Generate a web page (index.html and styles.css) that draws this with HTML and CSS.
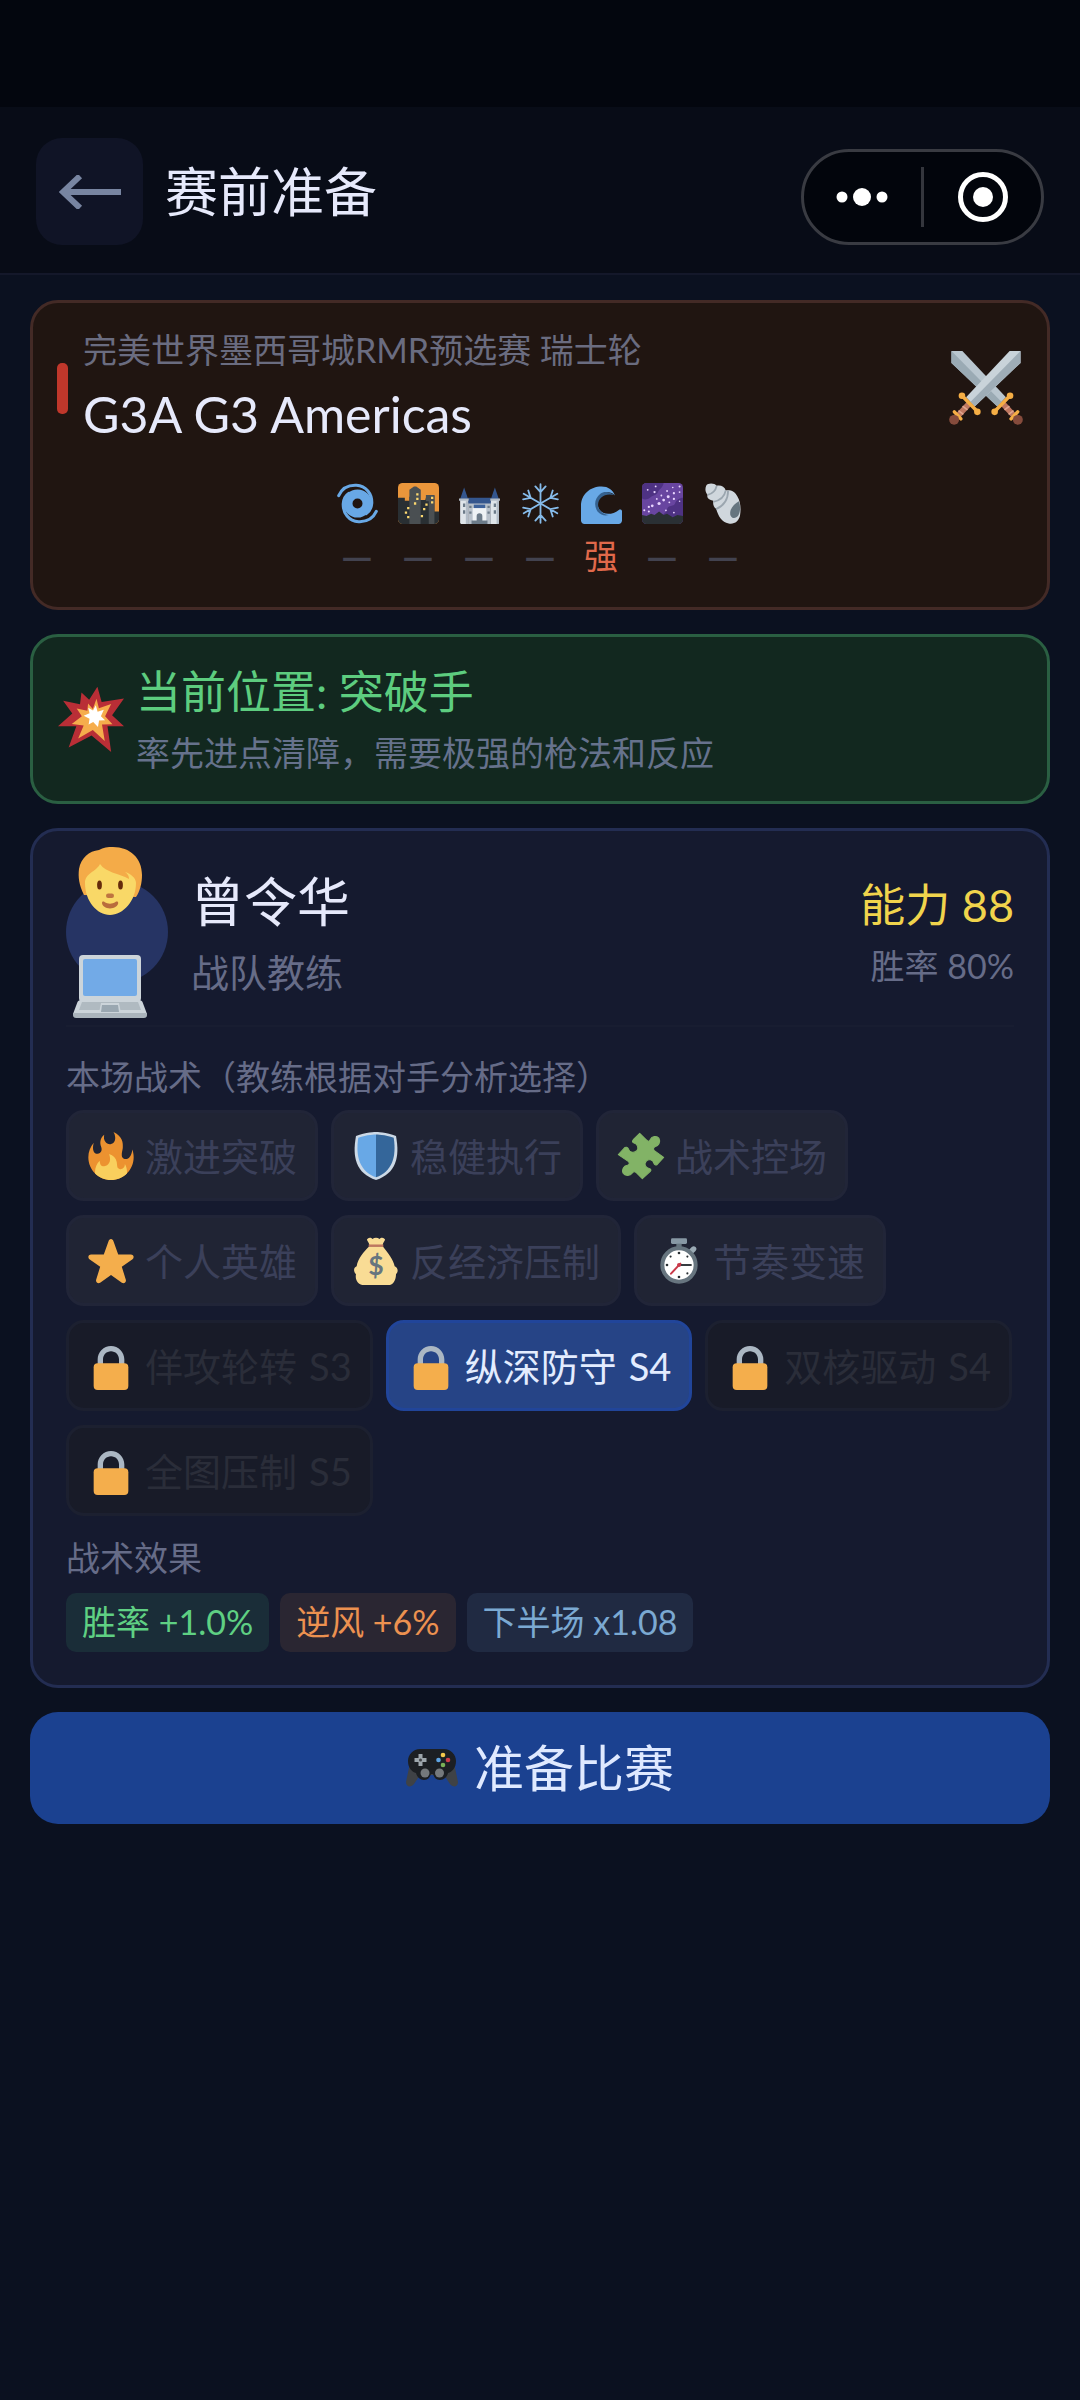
FILE: index.html
```html
<!DOCTYPE html>
<html lang="zh-CN">
<head>
    <meta charset="UTF-8">
    <meta name="viewport" content="width=device-width, initial-scale=1.0">
    <title>赛前准备</title>
    <link rel="stylesheet" href="styles.css">
</head>
<body>
    <!-- icon set -->
    <svg class="sprite" aria-hidden="true">
        <symbol id="i-swords" viewBox="0 0 36 36">
            <path fill="#b9c6cf" d="M1.2 0h5.3l21.2 22.5-4.2 4.5L1.2 5.8z"/>
            <path fill="#9aaab4" d="M1.2 0v5.8L23.5 27l2.1-2.2z"/>
            <path stroke="#bf7760" stroke-width="2.8" d="M25.8 25.2l7 7.6"/>
            <path stroke="#e0a58f" stroke-width=".8" d="M27 28.6l2.4-1.8M29 30.8l2.4-1.8"/>
            <path stroke="#f5ae45" stroke-width="1.7" stroke-linecap="round" d="M29.4 22l-7.2 7.4M30.2 33l3.2-3.4"/>
            <circle cx="29.7" cy="21.8" r="1.6" fill="#f5ae45"/>
            <circle cx="22.2" cy="29.6" r="1.6" fill="#f5ae45"/>
            <circle cx="33.5" cy="33.5" r="2.4" fill="#854b3c"/>
            <path fill="#c9d3da" d="M34.8 0h-5.3L8.3 22.5l4.2 4.5L34.8 5.8z"/>
            <path fill="#9fadb7" d="M34.8 0v5.8L12.5 27l-2.1-2.2z"/>
            <path stroke="#bf7760" stroke-width="2.8" d="M10.2 25.2l-7 7.6"/>
            <path stroke="#e0a58f" stroke-width=".8" d="M9 28.6l-2.4-1.8M7 30.8l-2.4-1.8"/>
            <path stroke="#f5ae45" stroke-width="1.7" stroke-linecap="round" d="M6.6 22l7.2 7.4M5.8 33l-3.2-3.4"/>
            <circle cx="6.3" cy="21.8" r="1.6" fill="#f5ae45"/>
            <circle cx="13.8" cy="29.6" r="1.6" fill="#f5ae45"/>
            <circle cx="2.5" cy="33.5" r="2.4" fill="#854b3c"/>
        </symbol>
        <symbol id="i-cyclone" viewBox="0 0 36 36">
            <g fill="none" stroke="#68a8e6">
                <circle cx="18" cy="18" r="8.4" stroke-width="8"/>
                <path stroke-width="2.7" stroke-linecap="round" d="M1.5 11C4.5 4.5 10.5 1.7 17 2c8.5.4 14 7.5 13.5 16-.3 4-2 7-5 9"/>
                <path stroke-width="2.7" stroke-linecap="round" d="M34.5 25c-3 6.5-9 9.3-15.5 9-8.5-.4-14-7.5-13.5-16 .3-4 2-7 5-9"/>
            </g>
        </symbol>
        <symbol id="i-city" viewBox="0 0 36 36">
            <rect width="36" height="36" rx="4" fill="#eb963b"/>
            <path fill="#292f33" d="M0 13h6v2.5h4V12h8v3h6l1-4h7v14h4v7a4 4 0 0 1-4 4H4a4 4 0 0 1-4-4z"/>
            <path fill="#4a4f52" d="M10 36V6l4-3h2l4 3v30zM24.5 36V10.5H32V36z"/>
            <path fill="#292f33" d="M20 36V19h4v-3h3v20z"/>
            <path fill="#fbd870" d="M16 9h2v2h-2zM16 13h2v2h-2zM14 17h2v2h-2zM8 21h2v2H8zM6 25h2v2H6zM8 29h2v2H8zM24 18h2v2h-2zM22 22h2v2h-2zM20 28h2v2h-2zM29 12h2v2h-2zM29 16h2v2h-2z"/>
        </symbol>
        <symbol id="i-castle" viewBox="0 0 36 36">
            <path fill="#b8c1cb" d="M8 17h20v19H8z"/>
            <path fill="#34568e" d="M8 13h20v5H8zM1 14L4.5 4 8 14zM28 14l3.5-10L35 14z"/>
            <path fill="#dfe5ea" d="M1 14h7v22H2a1 1 0 0 1-1-1zM28 14h7v21a1 1 0 0 1-1 1h-6z"/>
            <path fill="#b2bcc7" d="M6 16h2v20H6zM33 16h2v20h-2zM0 13.5h8.5v2H0zM27.5 13.5H36v2h-8.5z"/>
            <path fill="#eef2f5" d="M12 22h12v14H12z"/>
            <path fill="#3d629b" d="M13 19h10v3H13z"/>
            <path fill="#6c7b89" d="M15.5 36v-7a2.5 2.5 0 0 1 5 0v7zM11 33h14v3H11zM3.5 18h2v3h-2zM3.5 24h2v3h-2zM30.5 18h2v3h-2zM30.5 24h2v3h-2zM9 20h2v2H9zM9 25h2v2H9zM25 20h2v2h-2zM25 25h2v2h-2z"/>
        </symbol>
        <symbol id="i-snow" viewBox="0 0 36 36">
            <g fill="none" stroke="#86bbea" stroke-width="1.6" stroke-linecap="round">
                <path id="flake-arm" d="M18 1v34M13.5 3l4.5 5 4.5-5M13.5 33l4.5-5 4.5 5"/>
                <use href="#flake-arm" transform="rotate(60 18 18)"/>
                <use href="#flake-arm" transform="rotate(120 18 18)"/>
            </g>
        </symbol>
        <symbol id="i-wave" viewBox="0 0 36 36">
            <path fill="#68a8e6" d="M0 33V20C0 10 8 3 18 3c6 0 10 3 11.8 8-3-3.5-7.8-3.8-11.3-1-4 3-5 9-2.5 13 3.5 5.5 11.5 5 17.2.6 1-.8 2.8-.5 2.8 1V33c0 1.7-1.3 3-3 3H3c-1.7 0-3-1.3-3-3z"/>
            <path fill="#35618f" d="M29 10.5c-4-3-9-3.5-12-1-5 4-6 10-2.5 15.500 3 3.500 6.500 4 10 3.200-5.500-1-9.500-4-9.500-9.200 0-6 6-10.500 14-8.500z"/>
        </symbol>
        <symbol id="i-galaxy" viewBox="0 0 36 36">
            <rect width="36" height="36" rx="4" fill="#6845a0"/>
            <path fill="#4e3283" d="M4 0h15c-1 5-4 5-5 8s-5 3-7 5-7 2-7 0V4a4 4 0 0 1 4-4zM36 13v17H16c2-3 5-3 6-7s6-2 7-5 4-5 7-5z"/>
            <path fill="#2a3034" d="M0 28l4 1 4-2 3 1 4-3 4 3 3-1 5 3 4-2 5 1v3a4 4 0 0 1-4 4H4a4 4 0 0 1-4-4z"/>
            <g fill="#e9d5ff">
                <circle cx="15" cy="18" r="1.4"/><circle cx="19" cy="15" r="1.2"/><circle cx="23" cy="12" r="1.3"/><circle cx="9" cy="20" r="1.2"/>
                <circle cx="28" cy="9" r="1"/><circle cx="33" cy="3" r=".9"/><circle cx="11" cy="8" r="1"/><circle cx="12" cy="3" r=".8"/>
                <circle cx="5" cy="6" r=".8"/><circle cx="6" cy="21" r="1"/><circle cx="2" cy="24" r=".9"/><circle cx="6" cy="25" r=".9"/>
                <circle cx="13" cy="14" r=".8"/><circle cx="17" cy="11" r=".8"/><circle cx="22" cy="7" r=".8"/><circle cx="28" cy="14" r="1"/>
                <circle cx="24" cy="17" r=".8"/><circle cx="21" cy="24" r=".8"/><circle cx="28" cy="26" r=".8"/><circle cx="33" cy="8" r=".8"/><circle cx="33" cy="16" r=".7"/><circle cx="27" cy="4" r=".7"/>
            </g>
        </symbol>
        <symbol id="i-shell" viewBox="0 0 36 36">
            <path fill="#d0d7dd" d="M3 2c1-2 7-2.5 9 .5 3-1 7 .5 8 4 5-.5 8 1 10 5 3 5 3.5 11 2.5 17-1 5-5 8-10 7-6-1-9-6-11-13-2-1-3-4-2.5-7-4-.5-6-2.5-5-5C2 8 1.5 5 3 2z"/>
            <path fill="none" stroke="#9ba6af" stroke-width="1.6" d="M12 2.5C11 7 8 9.5 4 10.5M20 6.5c-1 5-5 9-11 10M22 7c0 7-4 13-10.5 16"/>
            <path fill="#66757f" d="M31.5 16c1.5 4 1.5 9-.5 12.5-2 3-6 3-7-.5-1-5 3-9.5 7.5-12z"/>
        </symbol>
        <symbol id="i-boom" viewBox="0 0 36 36">
            <path fill="#b92e36" d="M21.5.4l2.3 8.3L36 6.8 29.5 16l6.5 6h-9l2 14-10.7-9-12.5 6.6L10 22H0l7.8-7-5-7 9.2 2 .8-6.5 4.200 4z"/>
            <path fill="#f6ad4c" d="M21 7l1.3 5.2L29 9.800l-3.300 6.700 4 4.300-5.700.2 1.500 9-6.500-6-8 4.600 3-7-6.500-.9 5.500-4.200-2.800-4.200 5.800 1.200.4-4 2.600 3z"/>
            <path fill="#fff" d="M20.600 10.500l1 3.500 3.400-1-1.600 3.500 2.300 2.200-3.300.1-.6 3.500-2.600-2.600-2.500 1.300.5-3.200-3.200-1.600 3.200-1.300-.7-3 2.600 1.500z"/>
        </symbol>
        <symbol id="i-person" viewBox="0 0 74 74">
            <path fill="#f4ab48" d="M11 50C6 40 5 32 6 24 8 13 16 6 26 5c4-2.6 9-3 14-3 17 0 29 11 29 28 0 8-2 16-6 22z"/>
            <path fill="#f9d867" d="M27 19c-4 8-15 9-15 19 0 18 12 32 25 32s26-14 26-32c0-5-5-9-11-11 3 2 4 4 4 7-10-6-23-6-29-15z"/>
            <ellipse cx="26.5" cy="40" rx="2.4" ry="4.5" fill="#652b0b"/>
            <ellipse cx="47.5" cy="40" rx="2.4" ry="4.5" fill="#652b0b"/>
            <rect x="33" y="48.500" width="8" height="4.500" rx="2.2" fill="#bf7440"/>
            <path fill="#b96c3c" d="M29 58c0-1.5 1.5-1.8 2.5-1 3.5 2.3 7.5 2.3 11 0 1-.8 2.7-.5 2.7 1 0 3-4 5.4-8.2 5.4S29 61 29 58z"/>
        </symbol>
        <symbol id="i-laptop" viewBox="0 0 74 74">
            <rect x="6" y="9" width="62" height="47" rx="4" fill="#ccd4da"/>
            <rect x="10" y="13" width="54" height="37" rx="2" fill="#72aae7"/>
            <path fill="#ccd4da" d="M8 54h58c2 0 3 1 3.5 2L74 68H0l4.5-12c.5-1 1.5-2 3.5-2z"/>
            <path fill="#b0bac1" d="M9 56h56l3 8H6z"/>
            <path fill="#ccd4da" d="M28 57h18l2 10H26z"/>
            <path fill="#9aa7b1" d="M29 59h16l1 7H28z"/>
            <path fill="#aab4bc" d="M0 67h74v2a3 3 0 0 1-3 3H3a3 3 0 0 1-3-3z"/>
        </symbol>
        <symbol id="i-fire" viewBox="0 0 36 36">
            <path fill="#ec9230" d="M35 19c0-2.062-.367-4.039-1.04-5.868-.46 5.389-3.333 8.157-6.335 6.868-2.812-1.208-.917-5.917-.777-8.164.236-3.809-.012-8.169-6.931-11.794 2.875 5.5.333 8.917-2.333 9.125-2.958.231-5.667-2.542-4.667-7.042-3.238 2.386-3.332 6.402-2.333 9 1.042 2.708-.042 4.958-2.583 5.208-2.84.28-4.418-3.041-2.963-8.333C2.52 10.965 1 14.805 1 19c0 9.389 7.611 17 17 17s17-7.611 17-17z"/>
            <path fill="#f9cf5d" d="M28.394 23.999c.148 3.084-2.561 4.293-4.019 3.709-2.106-.843-1.541-2.291-2.083-5.291s-2.625-5.083-5.708-6c2.25 6.333-1.247 8.667-3.08 9.084-1.872.426-3.753-.001-3.968-4.007C7.352 23.668 6 26.676 6 30c0 .368.023.73.055 1.09C9.125 34.124 13.342 36 18 36s8.875-1.876 11.945-4.91c.032-.36.055-.722.055-1.09 0-2.187-.584-4.236-1.606-6.001z"/>
        </symbol>
        <symbol id="i-shield" viewBox="0 0 36 36">
            <path fill="#ccd9e6" d="M33 3c-7-3-15-3-15-3S10 0 3 3c-3 16 0 28 15 33C33 31 36 19 33 3z"/>
            <path fill="#68a8e6" d="M18 1.8c-.1 0-7 0-13.3 2.5C2.5 19 6 29.5 18 34z"/>
            <path fill="#34669a" d="M18 1.8c.1 0 7 0 13.3 2.5C33.5 19 30 29.5 18 34z"/>
        </symbol>
        <symbol id="i-puzzle" viewBox="0 0 36 36">
            <path fill="#82b366" stroke="#82b366" stroke-width=".8" stroke-linejoin="round" d="M17 1l5 5c1.5 1.5 2.5 1 3-.5 1-2.5 5-3 6.5-.7 1.5 2.7-.5 5.7-3 6.2-1.2.5-1.5 1.8-.5 3l7 5-5 5.5c-1 .5-2 .1-2.3-1-.7-3-4.2-3.5-5.9-1.5-1.8 2.2-.3 5 2.2 5.4 1.5.4 1.8 1.2 1 2.1l-6 5.5-4.5-4.5c-1.2-1.2-2.5-.9-3.2.5-1.3 2-5.3 2.3-6.7 0-1.3-2.7.4-5.7 3.1-6 1.6-.4 1.9-1.7 1-2.8L1 17l4.500-5c1-1 2.5-.7 3.1.8.9 2.7 4.4 3.2 6.2 1.2 1.7-2 .7-5-2-5.700-1.400-.5-1.500-1.500-.6-2.500z"/>
        </symbol>
        <symbol id="i-star" viewBox="0 0 36 36">
            <path fill="#f4ae4c" d="M27.287 34.627c-.404 0-.806-.124-1.152-.371L18 28.422l-8.135 5.834c-.343.246-.743.37-1.147.37-.4 0-.803-.122-1.148-.37-.693-.5-.984-1.39-.72-2.203l3.034-9.72-8.062-5.681c-.696-.5-.98-1.394-.716-2.207.261-.8 1.017-1.344 1.862-1.344H12.6l3.48-9.8C16.327 2.2 17.12 1.5 18 1.5s1.673.7 1.92 1.8l3.48 9.8H33c.85 0 1.6.54 1.87 1.35.26.81-.02 1.7-.72 2.2l-8.06 5.68 3.03 9.72c.27.81-.02 1.7-.71 2.2-.35.25-.75.37-1.12.37z"/>
        </symbol>
        <symbol id="i-money" viewBox="0 0 36 36">
            <path fill="#f9dc95" d="M13 7h10c4 5 8 10 9 15 2.5 1 3 4 1 6 0 4-2 8-5 8H8c-3 0-6-4-5-8-2-2-2-5 .5-6C4.5 16 9 11 13 7zM11.5 1.5c1.5-1.5 3-1 3.8 0 1.7-1.3 3.7-1.3 5.4 0 .8-1 2.3-1.5 3.8 0 1 1-1.5 2.5-1.5 4.5H13c0-2-2.500-3.5-1.500-4.500z"/>
            <path fill="#bf7760" d="M12.5 5.600h11v1.800h-11z"/>
            <text x="18" y="28.5" text-anchor="middle" font-family="Lato, sans-serif" font-size="20" font-weight="700" fill="#67757f">$</text>
        </symbol>
        <symbol id="i-watch" viewBox="0 0 36 36">
            <rect x="12" y="1" width="12" height="4.2" rx="1" fill="#8798a4"/>
            <path fill="#66757f" d="M16 5h4v3h-4z"/>
            <path stroke="#9aaab4" stroke-width="4" stroke-linecap="round" d="M27 11l2-2"/>
            <circle cx="18" cy="21" r="12.5" fill="#fff" stroke="#67757f" stroke-width="3"/>
            <path stroke="#292f33" stroke-width="1.4" d="M18 21h9.5"/>
            <path stroke="#c93a4a" stroke-width="1.5" stroke-linecap="round" d="M19 20l-7 7.5"/>
            <circle cx="18" cy="21" r="1.5" fill="#c93a4a"/>
            <g fill="#292f33"><circle cx="18" cy="12" r="1"/><circle cx="18" cy="30" r="1"/><circle cx="9" cy="21" r="1"/><circle cx="11.7" cy="14.7" r=".8"/><circle cx="24.3" cy="14.7" r=".8"/><circle cx="24.3" cy="27.3" r=".8"/></g>
        </symbol>
        <symbol id="i-lock" viewBox="0 0 36 36">
            <path fill="#abb7c3" d="M18 3C12.477 3 8 7.477 8 13v10h4V13c0-3.313 2.686-6 6-6s6 2.687 6 6v10h4V13c0-5.523-4.477-10-10-10z"/>
            <rect x="5" y="16" width="26" height="20" rx="3" fill="#f4ae4c"/>
        </symbol>
        <symbol id="i-pad" viewBox="0 0 52 38">
            <path fill="#3f4246" d="M4 14L0 33c0 5 5 6 8 2l6-9h24l6 9c3 4 8 3 8-2l-4-19z"/>
            <path fill="#1c1f23" d="M14 0h24c7 0 12 6 12 12 0 7-4 11-8 12-1 4-4 7-8 7s-6-3-7-6h-2c-1 3-3 6-7 6s-7-3-8-7C6 23 2 19 2 12 2 6 7 0 14 0z"/>
            <path fill="#9da6ac" d="M12.5 5h4v4h4v4h-4v4h-4v-4h-4V9h4z"/>
            <circle cx="14.5" cy="11" r="1.5" fill="#3f4246"/>
            <circle cx="37" cy="6" r="2.3" fill="#f4c84c"/><circle cx="32.5" cy="11" r="2.3" fill="#5fa5e4"/>
            <circle cx="42" cy="11" r="2.3" fill="#cf3b48"/><circle cx="37" cy="16" r="2.3" fill="#79b058"/>
            <circle cx="19" cy="24" r="4.5" fill="#75797c"/><circle cx="33.5" cy="24" r="4.5" fill="#75797c"/>
        </symbol>
    </svg>

    <div class="status-bar"></div>
    <header class="topbar">
        <button class="back" type="button" aria-label="返回">
            <svg viewBox="0 0 62 34" fill="none" stroke="#7885a1" stroke-width="6"><path d="M4 17h58M21 1L4 17l17 16"/></svg>
        </button>
        <h1 class="title">赛前准备</h1>
        <div class="capsule">
            <button class="capsule-btn" type="button" aria-label="更多">
                <svg class="dots" viewBox="0 0 52 20" fill="#fff"><circle cx="6" cy="10" r="5.5"/><circle cx="26" cy="10" r="9"/><circle cx="46" cy="10" r="5.5"/></svg>
            </button>
            <button class="capsule-btn" type="button" aria-label="关闭">
                <svg class="target" viewBox="0 0 50 50"><circle cx="25" cy="25" r="22.5" fill="none" stroke="#fff" stroke-width="5"/><circle cx="25" cy="25" r="10" fill="#fff"/></svg>
            </button>
        </div>
    </header>

    <main class="content">
        <section class="card match">
            <div class="match-head">
                <span class="accent"></span>
                <div class="match-info">
                    <p class="event">完美世界墨西哥城RMR预选赛 瑞士轮</p>
                    <h2 class="opponent">G3A G3 Americas</h2>
                </div>
                <svg class="swords"><use href="#i-swords"/></svg>
            </div>
            <ul class="maps">
                <li><svg><use href="#i-cyclone"/></svg><span>—</span></li>
                <li><svg><use href="#i-city"/></svg><span>—</span></li>
                <li><svg><use href="#i-castle"/></svg><span>—</span></li>
                <li><svg><use href="#i-snow"/></svg><span>—</span></li>
                <li class="strong"><svg><use href="#i-wave"/></svg><span>强</span></li>
                <li><svg><use href="#i-galaxy"/></svg><span>—</span></li>
                <li><svg><use href="#i-shell"/></svg><span>—</span></li>
            </ul>
        </section>

        <section class="card role">
            <svg class="boom"><use href="#i-boom"/></svg>
            <div>
                <h2 class="role-name">当前位置: 突破手</h2>
                <p class="role-desc">率先进点清障，需要极强的枪法和反应</p>
            </div>
        </section>

        <section class="card coach">
            <div class="coach-head">
                <div class="avatar">
                    <svg class="face"><use href="#i-person"/></svg>
                    <svg class="laptop"><use href="#i-laptop"/></svg>
                </div>
                <div class="coach-info">
                    <h2 class="coach-name">曾令华</h2>
                    <p class="coach-job">战队教练</p>
                </div>
                <div class="coach-stats">
                    <p class="ability">能力 88</p>
                    <p class="winrate">胜率 80%</p>
                </div>
            </div>
            <p class="label">本场战术（教练根据对手分析选择）</p>
            <div class="tactics">
                <button class="chip" type="button"><svg><use href="#i-fire"/></svg>激进突破</button>
                <button class="chip" type="button"><svg><use href="#i-shield"/></svg>稳健执行</button>
                <button class="chip" type="button"><svg><use href="#i-puzzle"/></svg>战术控场</button>
                <button class="chip" type="button"><svg><use href="#i-star"/></svg>个人英雄</button>
                <button class="chip" type="button"><svg><use href="#i-money"/></svg>反经济压制</button>
                <button class="chip" type="button"><svg><use href="#i-watch"/></svg>节奏变速</button>
                <button class="chip locked" type="button"><svg><use href="#i-lock"/></svg>佯攻轮转 <span>S3</span></button>
                <button class="chip active" type="button"><svg><use href="#i-lock"/></svg>纵深防守 <span>S4</span></button>
                <button class="chip locked" type="button"><svg><use href="#i-lock"/></svg>双核驱动 <span>S4</span></button>
                <button class="chip locked" type="button"><svg><use href="#i-lock"/></svg>全图压制 <span>S5</span></button>
            </div>
            <p class="label effects-label">战术效果</p>
            <div class="effects">
                <span class="tag green">胜率 +1.0%</span>
                <span class="tag orange">逆风 +6%</span>
                <span class="tag blue">下半场 x1.08</span>
            </div>
        </section>

        <button class="start" type="button"><svg><use href="#i-pad"/></svg>准备比赛</button>
    </main>
</body>
</html>
```
FILE: styles.css
```css
*{
    margin: 0;
    padding: 0;
    box-sizing: border-box;
}
body{
    min-height: 100vh;
    background-color: #0b1120;
    color: #e6e9fb;
    font-family: Lato, "Noto Sans CJK SC", sans-serif;
    font-size: 34px;
    line-height: 46px;
}
h1, h2{
    font-weight: 400;
}
button{
    font-family: inherit;
    color: inherit;
    border: none;
    background: none;
}
svg{
    display: block;
    flex: none;
}
.sprite{
    display: none;
}

/* top */
.status-bar{
    height: 107px;
    background-color: #03060e;
}
.topbar{
    display: flex;
    align-items: center;
    gap: 22px;
    padding: 31px 36px 28px;
    background-color: #080c17;
    border-bottom: 2px solid #14182a;
}
.back{
    display: flex;
    align-items: center;
    justify-content: center;
    width: 107px;
    height: 107px;
    border-radius: 26px;
    background-color: #101426;
}
.back svg{
    width: 62px;
    height: 34px;
}
.title{
    flex: 1;
    font-size: 53px;
    line-height: 70px;
}
.capsule{
    display: flex;
    gap: 5px;
    align-self: flex-end;
    width: 243px;
    height: 96px;
    border: 3px solid #393b42;
    border-radius: 48px;
    background-color: #02050c;
}
.capsule-btn{
    flex: 1;
    display: flex;
    align-items: center;
    justify-content: center;
    position: relative;
}
.capsule-btn + .capsule-btn::before{
    content: "";
    position: absolute;
    left: -4px;
    top: 15px;
    bottom: 15px;
    width: 3px;
    background-color: #34363d;
}
.dots{
    width: 52px;
    height: 20px;
}
.target{
    width: 50px;
    height: 50px;
}

/* cards */
.content{
    display: flex;
    flex-direction: column;
    gap: 24px;
    padding: 25px 30px;
}
.card{
    border: 3px solid;
    border-radius: 28px;
}
.match{
    padding: 24px 24px 29px;
    background-color: #201511;
    border-color: #432a26;
}
.match-head{
    display: flex;
    align-items: center;
    gap: 15px;
}
.accent{
    width: 11px;
    height: 51px;
    border-radius: 5px;
    background-color: #bf372b;
}
.match-info{
    flex: 1;
}
.event{
    color: #6a6c80;
}
.opponent{
    margin-top: 6px;
    font-size: 50px;
    line-height: 70px;
}
.swords{
    width: 74px;
    height: 74px;
}
.maps{
    display: flex;
    justify-content: center;
    gap: 20px;
    margin-top: 34px;
    list-style: none;
}
.maps li{
    display: flex;
    flex-direction: column;
    align-items: center;
    gap: 8px;
    width: 41px;
    font-family: "Noto Sans CJK SC", sans-serif;
    font-weight: 700;
    color: #42424f;
}
.maps svg{
    width: 41px;
    height: 41px;
}
.maps .strong{
    font-weight: 400;
    color: #e0694b;
}
.role{
    display: flex;
    align-items: center;
    gap: 12px;
    padding: 25px;
    background-color: #12281f;
    border-color: #2a5f42;
}
.boom{
    width: 66px;
    height: 66px;
}
.role-name{
    margin-bottom: 8px;
    font-size: 45px;
    line-height: 60px;
    color: #5dcd7f;
}
.role-desc{
    color: #66728c;
}

/* coach */
.coach{
    padding: 36px 33px 33px;
    background-color: #151a2f;
    border-color: #232d52;
}
.coach-head{
    display: flex;
    align-items: center;
    gap: 23px;
    padding-bottom: 28px;
    margin-bottom: 27px;
    border-bottom: 2px solid #181d31;
}
.avatar{
    position: relative;
    width: 102px;
    height: 102px;
    border-radius: 50%;
    background-color: #263464;
}
.face, .laptop{
    position: absolute;
    left: 7px;
    width: 74px;
    height: 74px;
}
.face{
    top: -36px;
}
.laptop{
    bottom: -37px;
}
.coach-info{
    flex: 1;
}
.coach-name{
    margin-bottom: 10px;
    font-size: 53px;
    line-height: 70px;
}
.coach-job{
    font-size: 38px;
    line-height: 50px;
    color: #666c88;
}
.coach-stats{
    text-align: right;
}
.ability{
    margin-bottom: 8px;
    font-size: 45px;
    line-height: 60px;
    color: #f0d44c;
}
.winrate, .label{
    color: #666c88;
}
.tactics{
    display: flex;
    flex-wrap: wrap;
    gap: 14px 13px;
    margin-top: 10px;
}
.chip{
    display: flex;
    align-items: center;
    gap: 10px;
    height: 91px;
    padding: 0 18px;
    border: 3px solid #212538;
    border-radius: 18px;
    background-color: #202434;
    font-size: 38px;
    line-height: 50px;
    color: #3b405a;
}
.chip svg{
    width: 48px;
    height: 48px;
}
.chip span{
    margin-left: 2px;
}
.locked{
    border-color: #1c2030;
    background-color: #181b28;
    color: #2a2d39;
}
.active{
    border-color: #21459a;
    background-color: #264486;
    color: #e3ecff;
}
.effects-label{
    margin-top: 19px;
}
.effects{
    display: flex;
    gap: 11px;
    margin-top: 12px;
}
.tag{
    padding: 6px 16px 7px;
    border-radius: 10px;
}
.green{
    background-color: #1a2d38;
    color: #5fd083;
}
.orange{
    background-color: #2a2632;
    color: #ec9150;
}
.blue{
    background-color: #202a42;
    color: #7ba9d2;
}
.start{
    display: flex;
    align-items: center;
    justify-content: center;
    gap: 16px;
    height: 112px;
    border-radius: 28px;
    background-color: #1b4190;
    font-size: 50px;
    line-height: 70px;
    color: #dfe9ff;
}
.start svg{
    width: 52px;
    height: 38px;
}
```
